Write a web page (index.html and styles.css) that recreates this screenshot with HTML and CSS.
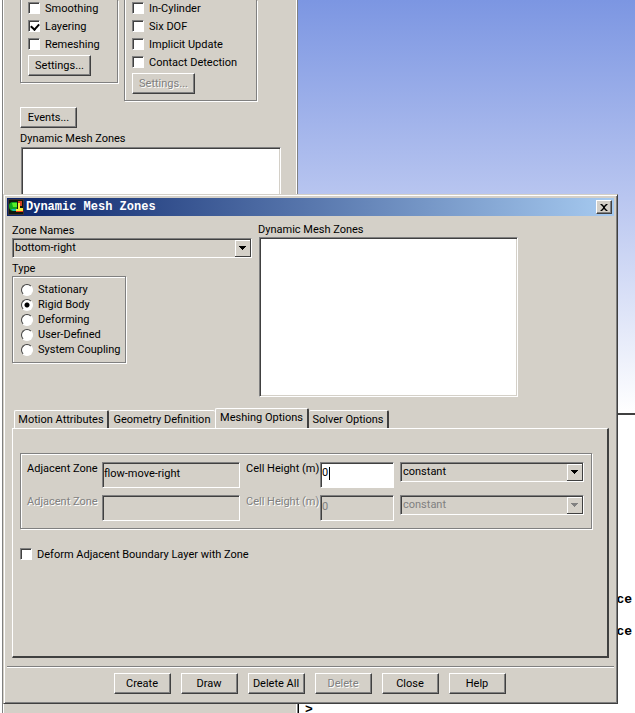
FILE: index.html
```
<!DOCTYPE html>
<html lang="en">
<head>
<meta charset="utf-8">
<title>Dynamic Mesh Zones</title>
<link rel="stylesheet" href="styles.css">
</head>
<body>
<main class="workspace">
  <section class="task-page" aria-label="Dynamic Mesh">
    <div class="method-groups">
      <div class="group methods">
        <label class="option"><input type="checkbox" class="check">Smoothing</label>
        <label class="option"><input type="checkbox" class="check" checked>Layering</label>
        <label class="option"><input type="checkbox" class="check">Remeshing</label>
        <button type="button" class="btn settings">Settings...</button>
      </div>
      <div class="group options">
        <label class="option"><input type="checkbox" class="check">In-Cylinder</label>
        <label class="option"><input type="checkbox" class="check">Six DOF</label>
        <label class="option"><input type="checkbox" class="check">Implicit Update</label>
        <label class="option"><input type="checkbox" class="check">Contact Detection</label>
        <button type="button" class="btn settings" disabled>Settings...</button>
      </div>
    </div>
    <button type="button" class="btn events">Events...</button>
    <h2 class="caption">Dynamic Mesh Zones</h2>
    <div class="list page-list"></div>
  </section>
  <section class="views">
    <div class="graphics"></div>
    <div class="console">
      <div class="console-lines"><p>ce</p><p>ce</p></div>
      <p class="prompt">&gt;</p>
    </div>
  </section>
</main>

<section class="dialog" role="dialog" aria-labelledby="dialog-title">
  <header class="titlebar">
    <svg class="app-icon" viewBox="0 0 16 16" aria-hidden="true">
      <rect width="16" height="16" fill="#3a3038"/>
      <rect x="1" y="1" width="14" height="14" fill="#0c180c"/>
      <path d="M1 7Q1 3 5 3H9V12H4Q1 11 1 7Z" fill="#10a820"/>
      <path d="M4 4H9V8H5Z" fill="#58f028"/>
      <path d="M10 4H12V9H15V12H8V10H10Z" fill="#f5ee38"/>
      <path d="M10 2H14V7H12V4H10Z" fill="#d04020"/>
      <path d="M3 10H8V12H5Z" fill="#18b8b0"/>
      <path d="M8 12H15V13H8Z" fill="#e83818"/>
    </svg>
    <h1 class="title" id="dialog-title">Dynamic Mesh Zones</h1>
    <button type="button" class="close" aria-label="Close window">
      <svg viewBox="0 0 8 7" aria-hidden="true"><path d="M0 0H2L4 2L6 0H8L5 3V4L8 7H6L4 5L2 7H0L3 4V3Z" fill="#000"/></svg>
    </button>
  </header>

  <div class="zone-area">
    <div class="zone-left">
      <label class="caption" for="zone-names">Zone Names</label>
      <select class="combo" id="zone-names"><option>bottom-right</option></select>
      <h2 class="caption type-caption" id="type-label">Type</h2>
      <div class="group types" role="radiogroup" aria-labelledby="type-label">
        <label class="choice"><input type="radio" class="radio" name="type">Stationary</label>
        <label class="choice"><input type="radio" class="radio" name="type" checked>Rigid Body</label>
        <label class="choice"><input type="radio" class="radio" name="type">Deforming</label>
        <label class="choice"><input type="radio" class="radio" name="type">User-Defined</label>
        <label class="choice"><input type="radio" class="radio" name="type">System Coupling</label>
      </div>
    </div>
    <div class="zone-right">
      <h2 class="caption">Dynamic Mesh Zones</h2>
      <div class="list zone-list"></div>
    </div>
  </div>

  <div class="tabs" role="tablist">
    <button type="button" class="tab tab-motion" role="tab">Motion Attributes</button>
    <button type="button" class="tab tab-geometry" role="tab">Geometry Definition</button>
    <button type="button" class="tab tab-meshing selected" role="tab" aria-selected="true">Meshing Options</button>
    <button type="button" class="tab tab-solver" role="tab">Solver Options</button>
  </div>
  <div class="panel" role="tabpanel">
    <div class="group cells">
      <div class="cell-row">
        <label for="adj-1">Adjacent Zone</label>
        <input type="text" class="field" id="adj-1" value="flow-move-right" readonly>
        <label for="height-1">Cell Height (m)</label>
        <div class="editing field"><input type="text" class="bare" id="height-1" value="0" size="1"><span class="caret"></span></div>
        <select class="combo" aria-label="Cell height method"><option>constant</option></select>
      </div>
      <div class="cell-row off">
        <label for="adj-2">Adjacent Zone</label>
        <input type="text" class="field" id="adj-2" disabled>
        <label for="height-2">Cell Height (m)</label>
        <input type="text" class="field" id="height-2" value="0" disabled>
        <select class="combo" aria-label="Second cell height method" disabled><option>constant</option></select>
      </div>
    </div>
    <label class="option deform"><input type="checkbox" class="check">Deform Adjacent Boundary Layer with Zone</label>
  </div>

  <footer class="actions">
    <button type="button" class="btn">Create</button>
    <button type="button" class="btn">Draw</button>
    <button type="button" class="btn">Delete All</button>
    <button type="button" class="btn" disabled>Delete</button>
    <button type="button" class="btn">Close</button>
    <button type="button" class="btn">Help</button>
  </footer>
</section>
</body>
</html>
```
FILE: styles.css
```
:root {
  --face: #d4d0c8;
  --shade: #808080;
  --dark: #404040;
}

* { box-sizing: border-box; }

body {
  margin: 0;
  position: relative;
  overflow: hidden;
  background: #fff;
  color: #000;
}

body, button, input, select, h2 {
  font: 11px/14px Roboto, Tahoma, sans-serif;
}

h1, h2, p { margin: 0; }

.workspace {
  display: grid;
  grid-template-columns: 298px 1fr;
  height: 100vh;
}

/* Task page behind the dialog */
.task-page {
  background: var(--face);
  border-left: 1px solid var(--shade);
  border-right: 1px solid var(--shade);
  box-shadow: inset 1px 0 #fff, inset -1px 0 #fff;
  margin-left: 2px;
  padding: 0 16px 0 17px;
}

.method-groups {
  display: flex;
  align-items: flex-start;
  gap: 6px;
}

.group {
  border: 1px solid var(--shade);
  box-shadow: 1px 1px #fff, inset 1px 1px #fff;
}

.methods, .options {
  border-top: 0;
  padding: 0 7px 6px;
  box-shadow: 1px 1px #fff, inset 1px 0 #fff;
}

.methods { width: 98px; }
.options { width: 133px; }

.option {
  display: flex;
  align-items: center;
  gap: 5px;
  height: 18px;
  white-space: nowrap;
}

.check, .radio {
  appearance: none;
  flex: none;
  width: 12px;
  height: 12px;
  margin: 0;
  background: #fff;
}

.check {
  border: 1px solid;
  border-color: var(--shade) #fff #fff var(--shade);
  box-shadow: inset 1px 1px var(--dark);
}

.option .check { margin-bottom: 2px; }

.check:checked::after {
  content: "";
  display: block;
  width: 4px;
  height: 6px;
  margin: 1px 0 0 3px;
  border: solid #000;
  border-width: 0 2px 2px 0;
  transform: rotate(42deg);
}

.btn {
  height: 21px;
  padding: 0 4px;
  background: var(--face);
  color: #000;
  border: 1px solid;
  border-color: #fff var(--dark) var(--dark) #fff;
  border-radius: 0;
  box-shadow: inset -1px -1px var(--shade);
  white-space: nowrap;
}

.btn:disabled { color: var(--shade); text-shadow: 1px 1px #fff; }
.settings { display: block; width: 63px; margin-top: 1px; }
.events { display: block; width: 57px; margin: 6px 0 4px; }

.caption { display: block; line-height: 14px; }

.list {
  background: #fff;
  border: 1px solid;
  border-color: var(--shade) #fff #fff var(--shade);
  box-shadow: inset 1px 1px var(--dark), inset -1px -1px var(--face);
}

.page-list { height: 120px; margin: 1px 0 0 1px; }

/* Graphics window and console */
.views {
  display: grid;
  grid-template-rows: 415px 1fr;
}

.graphics {
  background: linear-gradient(#7c96e2, #b9c6f0 48%, #fff);
  border-bottom: 2px solid var(--dark);
}

.console {
  display: flex;
  flex-direction: column;
  justify-content: space-between;
  border-left: 1px solid #000;
  padding: 177px 3px 0 6px;
  font: bold 13px/16px "Liberation Mono", monospace;
}

.console-lines { display: grid; gap: 16px; text-align: right; }
.prompt { height: 11px; }

/* Dialog */
.dialog {
  position: absolute;
  top: 194px;
  left: 3px;
  right: 17px;
  height: 510px;
  display: flex;
  flex-direction: column;
  padding: 3px;
  background: var(--face);
  border: 1px solid;
  border-color: var(--face) var(--dark) var(--dark) var(--face);
  box-shadow: inset 1px 1px #fff, inset -1px -1px var(--shade);
}

.titlebar {
  display: flex;
  align-items: center;
  height: 18px;
  padding: 0 2px 0 1px;
  gap: 2px;
  background: linear-gradient(90deg, #0a246a, #a6caf0);
  color: #fff;
}

.app-icon { width: 16px; height: 16px; }
.title { flex: 1; font: bold 12px/16px "Liberation Mono", monospace; }

.close {
  display: grid;
  place-items: center;
  width: 16px;
  height: 14px;
  padding: 0;
  background: var(--face);
  border: 1px solid;
  border-color: #fff var(--dark) var(--dark) #fff;
  box-shadow: inset -1px -1px var(--shade);
}

.close svg { width: 8px; height: 7px; }

.zone-area {
  display: flex;
  gap: 6px;
  padding: 7px 4px 0 5px;
}

.zone-left { width: 240px; padding-top: 1px; }

.combo {
  appearance: none;
  display: block;
  width: 100%;
  height: 20px;
  padding: 0 20px 0 2px;
  color: #000;
  background: var(--face);
  border: 1px solid;
  border-color: var(--shade) #fff #fff var(--shade);
  border-radius: 0;
  box-shadow: inset 1px 1px var(--dark);
  background-image:
    linear-gradient(#000, #000), linear-gradient(#000, #000), linear-gradient(#000, #000), linear-gradient(#000, #000),
    linear-gradient(var(--dark), var(--dark)), linear-gradient(var(--dark), var(--dark)),
    linear-gradient(#fff, #fff), linear-gradient(#fff, #fff);
  background-repeat: no-repeat;
  background-size: 7px 1px, 5px 1px, 3px 1px, 1px 1px, 16px 1px, 1px 16px, 16px 1px, 1px 16px;
  background-position: right 5px top 7px, right 6px top 8px, right 7px top 9px, right 8px top 10px,
    right 0 bottom 0, right 0 top 1px, right 0 top 1px, right 15px top 1px;
}

.combo:disabled {
  color: var(--shade);
  opacity: 1;
  background-image:
    linear-gradient(#808080, #808080), linear-gradient(#808080, #808080), linear-gradient(#808080, #808080), linear-gradient(#808080, #808080),
    linear-gradient(var(--dark), var(--dark)), linear-gradient(var(--dark), var(--dark)),
    linear-gradient(#fff, #fff), linear-gradient(#fff, #fff);
}

.type-caption { margin-top: 4px; }

.types {
  width: 114px;
  padding: 5px 8px;
}

.choice {
  display: flex;
  align-items: center;
  gap: 5px;
  height: 15px;
  white-space: nowrap;
}

.radio {
  border: 1px solid;
  border-color: var(--dark) #fff #fff var(--dark);
  border-radius: 50%;
}

.radio:checked { background: radial-gradient(circle, #000 2px, #fff 3px); }

.zone-right { width: 260px; }
.zone-list { height: 160px; margin-left: 1px; }

/* Tabs */
.tabs {
  display: flex;
  align-items: flex-end;
  margin: 11px 6px 0 7px;
}

.tab {
  height: 18px;
  padding: 0;
  background: var(--face);
  border: solid;
  border-width: 1px 2px 0 1px;
  border-color: #fff var(--dark) #fff #fff;
  border-radius: 2px 2px 0 0;
  white-space: nowrap;
}

.tab-motion { width: 95px; }
.tab-geometry { width: 106px; border-left: 0; border-right: 0; }
.tab-meshing { width: 94px; }
.tab-solver { width: 80px; border-left: 0; }
.tab.selected { height: 21px; padding-bottom: 2px; margin-bottom: -1px; }

.panel {
  flex: 1;
  margin: 0 5px 0 5px;
  padding: 24px 15px 0 7px;
  border: solid;
  border-width: 1px 2px 2px 1px;
  border-color: #fff var(--dark) var(--dark) #fff;
}

.cells { padding: 8px 7px 0 6px; height: 76px; }

.cell-row {
  display: grid;
  grid-template-columns: 69px 138px 68px 74px 1fr;
  column-gap: 6px;
  height: 33px;
  align-items: start;
  white-space: nowrap;
}

.field {
  width: 100%;
  height: 26px;
  padding: 0 1px 4px;
  background: var(--face);
  color: #000;
  border: 1px solid;
  border-color: var(--shade) #fff #fff var(--shade);
  border-radius: 0;
  box-shadow: inset 1px 1px var(--dark);
}

.off { color: var(--shade); text-shadow: 1px 1px #fff; }
.field:disabled { color: var(--shade); }

.editing { display: flex; align-items: center; background: #fff; }
.bare { width: 7px; padding: 0; border: 0; outline: 0; background: none; }
.caret { width: 1px; height: 13px; background: #000; }

.deform { margin-top: 17px; }

.actions {
  display: flex;
  justify-content: center;
  gap: 10px;
  margin-top: 8px;
  padding: 6px 2px 6px 0;
  border-top: 1px solid var(--shade);
  box-shadow: inset 0 1px #fff;
}

.actions .btn { width: 57px; }
```
